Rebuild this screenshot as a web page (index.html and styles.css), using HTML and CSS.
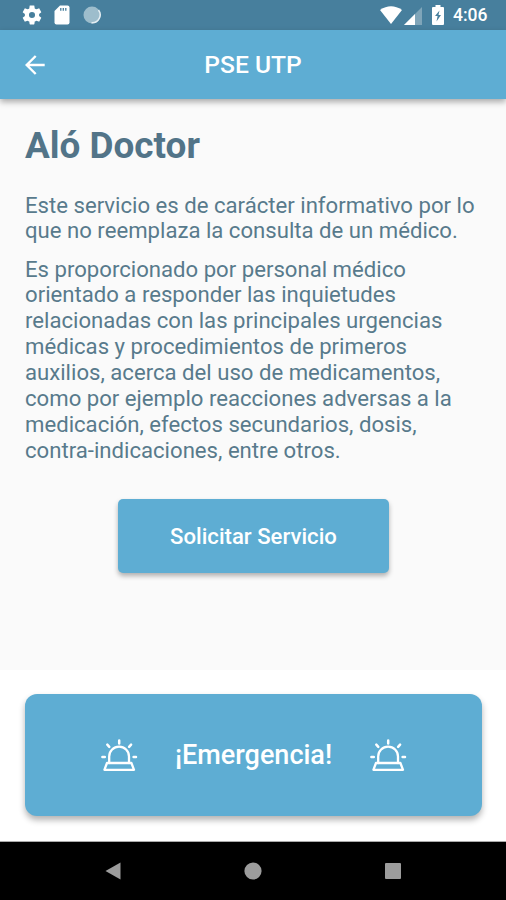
FILE: index.html
```html
<!DOCTYPE html>
<html lang="es">
<head>
<meta charset="utf-8">
<title>PSE UTP</title>
<link rel="stylesheet" href="styles.css">
</head>
<body>
<svg class="defs" width="0" height="0" aria-hidden="true">
  <symbol id="siren" viewBox="0 0 38 34">
    <g fill="none" stroke="#fff" stroke-width="2.3" stroke-linecap="round" stroke-linejoin="round">
      <path d="M9.200 25V18.500a9.900 9.900 0 0 1 19.800 0V25"/>
      <path d="M7 25H31.400L34 31.800H4.400Z"/>
      <path stroke-width="2.500" d="M19.200 2.600v2.800M7.300 6.700l2 2.200M31.100 6.700l-2 2.200M2.400 19h2.400M33.600 19h2.400"/>
    </g>
  </symbol>
</svg>
<div class="screen">
  <div class="status">
    <svg class="gear" width="20" height="20" viewBox="1.500 1.500 21 21" fill="#fff"><path d="M19.430 12.980c.04-.32.07-.64.07-.98s-.03-.66-.07-.98l2.110-1.650c.19-.15.24-.42.12-.64l-2-3.460c-.12-.22-.39-.3-.61-.22l-2.490 1c-.52-.4-1.080-.73-1.690-.98l-.38-2.650C14.460 2.180 14.250 2 14 2h-4c-.25 0-.46.18-.49.42l-.38 2.650c-.61.25-1.170.59-1.690.98l-2.490-1c-.23-.09-.49 0-.61.22l-2 3.460c-.13.22-.07.49.12.64l2.110 1.650c-.04.32-.07.65-.07.98s.03.66.07.98l-2.110 1.650c-.19.15-.24.42-.12.64l2 3.460c.12.22.39.3.61.22l2.490-1c.52.4 1.080.73 1.690.98l.38 2.650c.03.24.24.42.49.42h4c.25 0 .46-.18.49-.42l.38-2.650c.61-.25 1.170-.59 1.690-.98l2.490 1c.23.09.49 0 .61-.22l2-3.460c.12-.22.07-.49-.12-.64zM12 15.200a3.200 3.200 0 1 1 0-6.400 3.200 3.200 0 0 1 0 6.400z"/></svg>
    <svg class="sd" width="16" height="20" viewBox="0 0 16 20"><path fill="#fff" d="M6 0.500H13.500Q15.500.5 15.500 2.500V17.500Q15.500 19.500 13.500 19.500H2.500Q.5 19.500.5 17.500V6Z"/><path d="M6.800 3v2.800M9.300 3v2.800M11.800 3v2.800" stroke="#477f9d" stroke-width="1.300"/></svg>
    <svg class="sync" width="18" height="18" viewBox="0 0 18 18"><circle cx="9" cy="9" r="8.500" fill="#9dbdcc"/><path d="M15.500 4A8 8 0 0 1 8.500 16.800" fill="none" stroke="#e5eef3" stroke-width="1.500"/></svg>
    <span class="spacer"></span>
    <svg class="wifi" width="22" height="18" viewBox="0 0 22 18"><path fill="#fff" d="M0 4Q11-3.500 22 4L11 18Z"/></svg>
    <svg class="signal" width="18" height="18" viewBox="0 0 18 18"><path fill="#7fa5b9" d="M18 0V18H0Z"/><path fill="#fff" d="M11 7V18H0Z"/></svg>
    <svg class="battery" width="12" height="20" viewBox="0 0 12 20"><path fill="#fff" d="M3.500 0h5v2H11Q12 2 12 3V19Q12 20 11 20H1Q0 20 0 19V3Q0 2 1 2H3.500Z"/><path fill="#477f9d" d="M7.500 5.500 3 11h2.600L4.500 16.500 9 10H6.500Z"/></svg>
    <span class="clock">4:06</span>
  </div>
  <header class="appbar">
    <svg class="back" width="20" height="20" viewBox="0 0 20 20" fill="none" stroke="#fff" stroke-width="2.400"><path d="M19.700 10H2M10.700 1 1.700 10l9 9"/></svg>
    <span class="title">PSE UTP</span>
  </header>
  <main class="content">
    <h1>Aló Doctor</h1>
    <p>Este servicio es de carácter informativo por lo<br>que no reemplaza la consulta de un médico.</p>
    <p>Es proporcionado por personal médico<br>orientado a responder las inquietudes<br>relacionadas con las principales urgencias<br>médicas y procedimientos de primeros<br>auxilios, acerca del uso de medicamentos,<br>como por ejemplo reacciones adversas a la<br>medicación, efectos secundarios, dosis,<br>contra-indicaciones, entre otros.</p>
    <button class="request">Solicitar Servicio</button>
  </main>
  <footer class="bottom">
    <button class="emergency">
      <svg width="38" height="34"><use href="#siren"/></svg>
      <span>¡Emergencia!</span>
      <svg width="38" height="34"><use href="#siren"/></svg>
    </button>
  </footer>
  <nav class="navbar">
    <svg width="16" height="18" viewBox="0 0 16 18"><path fill="#9c9c9c" d="M15.500.5v17L.5 9Z"/></svg>
    <svg width="18" height="18" viewBox="0 0 18 18"><circle cx="9" cy="9" r="8.600" fill="#9c9c9c"/></svg>
    <svg width="16" height="16" viewBox="0 0 16 16"><rect width="16" height="16" rx="1" fill="#9c9c9c"/></svg>
  </nav>
</div>
</body>
</html>
```
FILE: styles.css
```css
* { box-sizing: border-box; }
body { margin: 0; font-family: Roboto, "Liberation Sans", sans-serif; }
.defs { display: none; }
.screen { width: 506px; height: 900px; display: flex; flex-direction: column; background: #fafafa; overflow: hidden; }
button { border: 0; padding: 0; font-family: inherit; color: #fff; background: #5eadd3; font-weight: 500; }
.status { height: 30px; flex: none; display: flex; align-items: center; padding: 0 19px 0 22px; background: #477f9d; }
.sd { margin-left: 12px; }
.sync { margin-left: 13px; }
.spacer { flex: 1; }
.signal { margin-left: 2px; margin-top: 2px; }
.battery { margin-left: 10px; }
.clock { margin-left: 9px; color: #fff; font: 500 17.500px/28px Roboto, sans-serif; width: 34px; white-space: nowrap; }
.appbar { height: 69px; flex: none; display: grid; grid-template-columns: 20px 1fr 20px; align-items: center; padding: 0 25px; background: #5eadd3; box-shadow: 0 3px 6px rgba(0,0,0,.32); }
.title { padding-top: 1px; text-align: center; color: #fff; font-size: 24.600px; line-height: 30px; font-weight: 500; }
.content { height: 571px; flex: none; padding: 25px 25px 0; }
h1 { margin: 0 0 25.600px; font-size: 36.900px; line-height: 43px; font-weight: 700; color: #527488; white-space: nowrap; }
p { margin: 0 0 12.300px; font-size: 22.150px; line-height: 25.860px; color: #587a8c; white-space: nowrap; }
.request { display: block; width: 271px; height: 74px; margin: 35.500px 0 0 93px; border-radius: 5px; font-size: 22.150px; box-shadow: 0 3px 5px rgba(0,0,0,.3); }
.bottom { height: 172px; flex: none; padding: 24px 24px 0 25px; background: #fff; border-bottom: 1px solid #aaa; }
.emergency { width: 457px; height: 122px; border-radius: 12px; display: flex; align-items: center; justify-content: center; gap: 37px; font-size: 27px; box-shadow: 0 4px 6px rgba(0,0,0,.3); }
.navbar { flex: 1; display: flex; align-items: center; justify-content: space-between; padding: 0 105px; background: #000; }
```
